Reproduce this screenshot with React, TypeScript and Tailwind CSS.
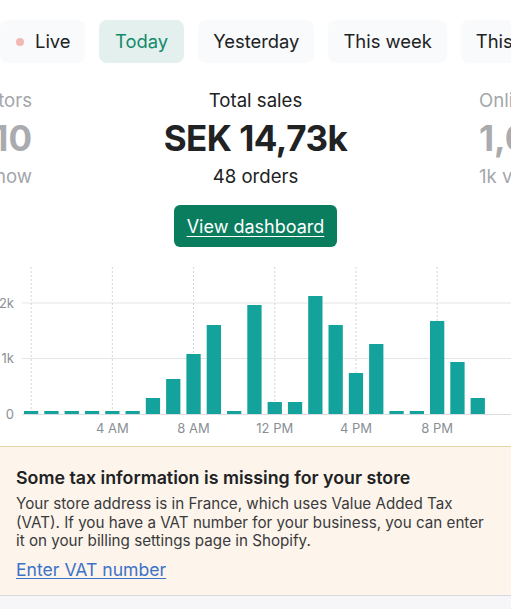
const bars = [3, 3, 3, 3, 3, 3, 16, 35, 60, 89, 3, 109, 12, 12, 118, 89, 41, 70, 3, 3, 93, 52, 16];
const ticks = [
  { i: 4, label: "4 AM" },
  { i: 8, label: "8 AM" },
  { i: 12, label: "12 PM" },
  { i: 16, label: "4 PM" },
  { i: 20, label: "8 PM" },
];
const pitch = 20.3;
const barW = 14.3;
const x0 = 24;
const base = 155;

function SalesChart() {
  return (
    <svg width="511" height="187" viewBox="0 0 511 187" className="block">
      <line x1="22" y1="44" x2="511" y2="44" stroke="#e4e5e7" strokeWidth="1" />
      <line x1="22" y1="99.5" x2="511" y2="99.5" stroke="#e4e5e7" strokeWidth="1" />
      {[0, 4, 8, 12, 16, 20].map((i) => {
        const cx = x0 + i * pitch + barW / 2;
        return (
          <line key={i} x1={cx} y1="8" x2={cx} y2={base} stroke="#d4d6d9" strokeWidth="1" strokeDasharray="2 2" />
        );
      })}
      {bars.map((h, i) => (
        <rect key={i} x={x0 + i * pitch} y={base - h} width={barW} height={h} fill="#14a39c" />
      ))}
      <line x1="22" y1={base + 0.5} x2="511" y2={base + 0.5} stroke="#dcdde0" strokeWidth="1" />
      <g fontFamily="Inter, sans-serif" fontSize="13" fill="#8a8f96">
        <text x="14" y="48.5" textAnchor="end">2k</text>
        <text x="14" y="104" textAnchor="end">1k</text>
        <text x="14" y="159.5" textAnchor="end">0</text>
        {ticks.map((t) => (
          <text key={t.i} x={x0 + t.i * pitch + barW / 2} y="174" textAnchor="middle">
            {t.label}
          </text>
        ))}
      </g>
    </svg>
  );
}

export default function App() {
  return (
    <div className="w-[511px] h-[609px] overflow-hidden bg-white font-['Inter',sans-serif] text-[#202223]">
      <div className="pt-[20px] flex gap-[14px] whitespace-nowrap">
        <div className="h-[43px] w-[85px] shrink-0 rounded-lg bg-[#f9fafb] pl-4 flex items-center gap-[11px] text-[18.4px]">
          <span className="h-2 w-2 rounded-full bg-[#f2b8b5]" />
          Live
        </div>
        <div className="h-[43px] shrink-0 rounded-lg bg-[#e4f0ee] px-4 flex items-center text-[18.4px] text-[#138a6c]">
          Today
        </div>
        <div className="h-[43px] shrink-0 rounded-lg bg-[#f9fafb] px-[15px] flex items-center text-[18.4px]">
          Yesterday
        </div>
        <div className="h-[43px] shrink-0 rounded-lg bg-[#f9fafb] px-[15px] flex items-center text-[18.4px]">
          This week
        </div>
        <div className="h-[43px] shrink-0 rounded-lg bg-[#f9fafb] px-[15px] flex items-center text-[18.4px]">
          This month
        </div>
      </div>

      <div className="mt-[25px] flex whitespace-nowrap">
        <div className="w-[32px] shrink-0 flex flex-col items-end text-[#a3a6aa]">
          <div className="text-[18.6px] leading-[24px]">Visitors</div>
          <div className="text-[35px] font-bold leading-[52px] text-[#a9abae]">10</div>
          <div className="text-[18.6px] leading-[24px]">right now</div>
        </div>
        <div className="flex-1 flex flex-col items-center">
          <div className="text-[18.6px] leading-[24px]">Total sales</div>
          <div className="text-[35px] font-bold leading-[52px] tracking-[-0.5px]">SEK 14,73k</div>
          <div className="text-[18.6px] leading-[24px]">48 orders</div>
          <button className="mt-[17px] h-[42px] w-[163px] rounded-md bg-[#0a7d5e] text-white text-[18px] underline underline-offset-[3px]">
            View dashboard
          </button>
        </div>
        <div className="w-[32px] shrink-0 flex flex-col items-start text-[#a3a6aa]">
          <div className="text-[18.6px] leading-[24px]">Online store sessions</div>
          <div className="text-[35px] font-bold leading-[52px] text-[#a9abae]">1,052</div>
          <div className="text-[18.6px] leading-[24px]">1k visitors</div>
        </div>
      </div>

      <div className="mt-[12px]">
        <SalesChart />
      </div>

      <div className="border-t-[1.5px] border-[#e6d6a8] bg-[#fdf4eb] px-4 pt-[20px] h-[149px]">
        <div className="text-[17.8px] font-semibold leading-[22px] whitespace-nowrap">
          Some tax information is missing for your store
        </div>
        <div className="mt-[6px] text-[15.2px] leading-[18.5px] text-[#3a3b3d] whitespace-nowrap">
          Your store address is in France, which uses Value Added Tax
          <br />
          (VAT). If you have a VAT number for your business, you can enter
          <br />
          it on your billing settings page in Shopify.
        </div>
        <a href="#" className="mt-[8px] inline-block text-[17.6px] leading-[22px] text-[#3b73c8] underline underline-offset-[2px]">
          Enter VAT number
        </a>
      </div>
      <div className="h-[14px] border-t border-[#d9d9db] bg-[#f6f6f8]" />
    </div>
  );
}
